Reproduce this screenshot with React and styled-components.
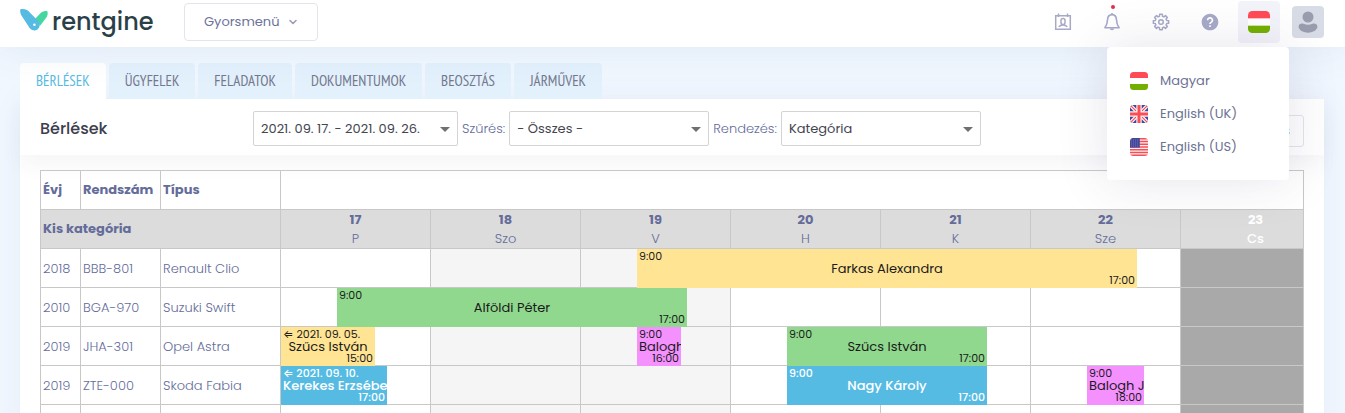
import React from "react";
import styled, { createGlobalStyle } from "styled-components";
import { BiSolidHelpCircle } from "react-icons/bi";
import { FiChevronDown } from "react-icons/fi";

//data
const tabs = ["BÉRLÉSEK", "ÜGYFELEK", "FELADATOK", "DOKUMENTUMOK", "BEOSZTÁS", "JÁRMŰVEK"];

const languages = [
	{ code: "hu", name: "Magyar" },
	{ code: "uk", name: "English (UK)" },
	{ code: "us", name: "English (US)" },
];

const days = [
	{ date: 17, name: "P" },
	{ date: 18, name: "Szo", kind: "weekend" },
	{ date: 19, name: "V", kind: "weekend" },
	{ date: 20, name: "H" },
	{ date: 21, name: "K" },
	{ date: 22, name: "Sze" },
	{ date: 23, name: "Cs", kind: "holiday" },
];

const cars = [
	{
		year: 2018,
		plate: "BBB-801",
		type: "Renault Clio",
		rentals: [{ day: 19, from: 9, end: 22, to: 17, name: "Farkas Alexandra", color: "yellow" }],
	},
	{
		year: 2010,
		plate: "BGA-970",
		type: "Suzuki Swift",
		rentals: [{ day: 17, from: 9, end: 19, to: 17, name: "Alföldi Péter", color: "green" }],
	},
	{
		year: 2019,
		plate: "JHA-301",
		type: "Opel Astra",
		rentals: [
			{ day: 17, from: 0, end: 17, to: 15, name: "Szűcs István", color: "yellow", since: "2021. 09. 05." },
			{ day: 19, from: 9, end: 19, to: 16, name: "Balogh János", color: "pink" },
			{ day: 20, from: 9, end: 21, to: 17, name: "Szűcs István", color: "green" },
		],
	},
	{
		year: 2019,
		plate: "ZTE-000",
		type: "Skoda Fabia",
		rentals: [
			{ day: 17, from: 0, end: 17, to: 17, name: "Kerekes Erzsébet", color: "blue", since: "2021. 09. 10." },
			{ day: 20, from: 9, end: 21, to: 17, name: "Nagy Károly", color: "blue" },
			{ day: 22, from: 9, end: 22, to: 18, name: "Balogh János", color: "pink" },
		],
	},
	{ year: "", plate: "", type: "", rentals: [] },
];

const DAY_WIDTH = 150;
const rentalColors = {
	yellow: "#ffe494",
	green: "#8fd88d",
	pink: "#f591ff",
	blue: "#56bbe3",
};

const offset = (hours) => Math.round((hours / 24) * DAY_WIDTH);

//eight teeth, four corners each
const gearPoints = Array.from({ length: 8 }, (_, tooth) =>
	[
		[-15, 5.9],
		[-10, 7.8],
		[10, 7.8],
		[15, 5.9],
	].map(([turn, radius]) => {
		const angle = ((tooth * 45 + turn) * Math.PI) / 180;
		return `${(9 + radius * Math.cos(angle)).toFixed(2)},${(9 + radius * Math.sin(angle)).toFixed(2)}`;
	})
)
	.flat()
	.join(" ");

function Flag({ code, size }) {
	return (
		<svg width={size} height={size} viewBox="0 0 18 18" aria-hidden="true">
			<clipPath id={`flag-${code}-${size}`}>
				<rect width="18" height="18" rx="3.5" />
			</clipPath>
			<g clipPath={`url(#flag-${code}-${size})`}>
				{code === "hu" && (
					<>
						<rect width="18" height="18" fill="#fff" />
						<rect width="18" height="6" fill="#ff4b55" />
						<rect y="12" width="18" height="6" fill="#73af00" />
					</>
				)}
				{code === "uk" && (
					<>
						<rect width="18" height="18" fill="#41479b" />
						<path d="M0 0L18 18M18 0L0 18" stroke="#f5f5f5" strokeWidth="3.6" />
						<path d="M0 0L18 18M18 0L0 18" stroke="#ff4b55" strokeWidth="1.2" />
						<path d="M9 0V18M0 9H18" stroke="#f5f5f5" strokeWidth="5.4" />
						<path d="M9 0V18M0 9H18" stroke="#ff4b55" strokeWidth="3" />
					</>
				)}
				{code === "us" && (
					<>
						<rect width="18" height="18" fill="#f5f5f5" />
						<path
							d="M0 .7H18M0 3.46H18M0 6.22H18M0 9H18M0 11.76H18M0 14.52H18M0 17.3H18"
							stroke="#ff4b55"
							strokeWidth="1.4"
						/>
						<rect width="9.8" height="9.6" fill="#41479b" />
						<path d="M1 2H9M1 4H9M1 6H9M1 8H9" stroke="#8e92c6" strokeWidth=".6" strokeDasharray="1 1" />
					</>
				)}
			</g>
		</svg>
	);
}

function Rental({ rental }) {
	const left = offset(rental.from);
	const width = (rental.end - rental.day) * DAY_WIDTH + offset(rental.to) - left;
	return (
		<RentalBar $color={rental.color} style={{ left, width }}>
			<Time>{rental.since ? `⇐ ${rental.since}` : `${rental.from}:00`}</Time>
			<Renter>{rental.name}</Renter>
			<Time $end>{rental.to}:00</Time>
		</RentalBar>
	);
}

function App() {
	return (
		<>
			<GlobalStyle />
			<Page>
				<TopBar>
					<Logo href="#">
						<svg width="28" height="26" viewBox="0 0 28 26" aria-hidden="true">
							<path
								d="M19.500 5.200C22 2 25.500 1.500 27.300 2.300C28.300 5 27.200 7.500 25.800 9.300L20.300 16.500L14.500 10.500z"
								fill="#44d7a0"
							/>
							<path
								d="M.2.4C4.500-.6 8 1.200 10.200 3.900L18.800 12.600a5.600 5.600 0 1 1-9.200 6.400L1.300 6.300C.3 4.500 0 2.400 .2.4z"
								fill="#56bbe3"
							/>
							<circle cx="14.400" cy="15.800" r="1.300" fill="#fff" />
						</svg>
						<Brand>rentgine</Brand>
					</Logo>
					<QuickMenu type="button">
						Gyorsmenü <FiChevronDown size={12} strokeWidth={3} />
					</QuickMenu>
					<Actions>
						<IconButton type="button" aria-label="Contacts">
							<svg width="18" height="18" viewBox="0 0 18 18" fill="none" stroke="currentColor" strokeWidth="1.5">
								<path d="M1.700 2.700H16.300V16.300H1.700zM4.500 .5V4M13.500 .5V4" />
								<path d="M7 9.500V7.500a2 2 0 0 1 4 0V9.500a2 2 0 0 1-4 0M4.800 13.800c1-1.500 2.400-1.900 4.200-1.900s3.200.4 4.200 1.900" />
							</svg>
						</IconButton>
						<IconButton type="button" aria-label="Notifications">
							<svg width="18" height="18" viewBox="0 0 18 18" fill="none" stroke="currentColor" strokeWidth="1.6">
								<path
									d="M9 1.600C5.800 1.600 4.600 4 4.500 7C4.400 10.500 3.800 12 1.900 14.700H16.100C14.200 12 13.600 10.500 13.500 7C13.400 4 12.200 1.600 9 1.600zM9 0V2"
									strokeLinejoin="round"
								/>
								<path d="M6.800 15.500a2.200 1.800 0 0 0 4.400 0z" fill="currentColor" stroke="none" />
							</svg>
							<Dot />
						</IconButton>
						<IconButton type="button" aria-label="Settings">
							<svg width="18" height="18" viewBox="0 0 18 18" fill="none" stroke="currentColor" strokeWidth="1.5">
								<polygon points={gearPoints} strokeLinejoin="round" />
								<circle cx="9" cy="9" r="2.300" />
							</svg>
						</IconButton>
						<IconButton type="button" aria-label="Help">
							<BiSolidHelpCircle size={20} />
						</IconButton>
						<LanguagePicker>
							<IconButton type="button" aria-label="Language" $active>
								<Flag code="hu" size={22} />
							</IconButton>
							<LanguageMenu>
								{languages.map((language) => (
									<li key={language.code}>
										<LanguageLink href="#">
											<Flag code={language.code} size={18} />
											{language.name}
										</LanguageLink>
									</li>
								))}
							</LanguageMenu>
						</LanguagePicker>
						<Avatar type="button" aria-label="Profile">
							<svg width="20" height="22" viewBox="0 0 20 22" fill="#9a9dad">
								<circle cx="10" cy="6" r="5.500" />
								<path d="M.5 16c0-3 3-4 5-3.200c3 1.200 6 1.200 9 0c2-.8 5 .2 5 3.200c-2 7.500-17 7.500-19 0z" />
							</svg>
						</Avatar>
					</Actions>
				</TopBar>
				<Content>
					<Tabs>
						{tabs.map((tab, i) => (
							<Tab href="#" key={tab} $active={i === 0}>
								{tab}
							</Tab>
						))}
					</Tabs>
					<Card>
						<Toolbar>
							<Title>Bérlések</Title>
							<Filters>
								<SelectBox $wide>
									<select aria-label="Időszak">
										<option>2021. 09. 17. - 2021. 09. 26.</option>
									</select>
								</SelectBox>
								<label htmlFor="filter">Szűrés:</label>
								<SelectBox>
									<select id="filter">
										<option>- Összes -</option>
									</select>
								</SelectBox>
								<label htmlFor="order">Rendezés:</label>
								<SelectBox>
									<select id="order">
										<option>Kategória</option>
									</select>
								</SelectBox>
							</Filters>
							<NewRental type="button">Új bérlés</NewRental>
						</Toolbar>
						<Schedule>
							<Table>
								<colgroup>
									<col width="40" />
									<col width="80" />
									<col width="120" />
									{days.map((day) => (
										<col key={day.date} width={DAY_WIDTH} />
									))}
								</colgroup>
								<thead>
									<tr>
										<th>Évj</th>
										<th>Rendszám</th>
										<th>Típus</th>
										<th colSpan={days.length} />
									</tr>
									<CategoryRow>
										<th colSpan={3}>Kis kategória</th>
										{days.map((day) => (
											<DayHead key={day.date} $kind={day.kind}>
												{day.date}
												<span>{day.name}</span>
											</DayHead>
										))}
									</CategoryRow>
								</thead>
								<tbody>
									{cars.map((car, i) => (
										<tr key={i}>
											<td>{car.year}</td>
											<td>{car.plate}</td>
											<td>{car.type}</td>
											{days.map((day) => (
												<DayCell key={day.date} $kind={day.kind}>
													{car.rentals
														.filter((rental) => rental.day === day.date)
														.map((rental) => (
															<Rental key={rental.from} rental={rental} />
														))}
												</DayCell>
											))}
										</tr>
									))}
								</tbody>
							</Table>
						</Schedule>
					</Card>
				</Content>
			</Page>
		</>
	);
}

const GlobalStyle = createGlobalStyle`
	* {
		box-sizing: border-box;
	}
	body {
		margin: 0;
		background: #f0f7ff;
		color: #646c9a;
		font-family: Poppins, Inter, "Noto Sans", sans-serif;
		font-size: 13px;
		font-weight: 300;
		line-height: 20px;
	}
	button, select {
		font: inherit;
		color: inherit;
	}
	a {
		text-decoration: none;
	}
`;

const Page = styled.div`
	height: 100vh;
	overflow: hidden;
`;

const TopBar = styled.header`
	position: relative;
	z-index: 2;
	display: flex;
	align-items: center;
	height: 47px;
	padding: 0 21px 3px 20px;
	background: white;
	box-shadow: 0 0 40px rgba(70, 85, 115, 0.1);
`;

const Logo = styled.a`
	display: flex;
	align-items: center;
	gap: 4px;
	width: 164px;
	color: #2b3f49;
`;

const Brand = styled.span`
	font-size: 24px;
	font-weight: 500;
	line-height: 40px;
`;

const QuickMenu = styled.button`
	display: flex;
	align-items: center;
	justify-content: space-between;
	width: 134px;
	height: 38px;
	padding: 0 18px 0 19px;
	color: #6c7299;
	font-weight: 400;
	background: white;
	border: 1px solid #e2e5ec;
	border-radius: 4px;
	svg {
		color: #959cb6;
	}
`;

const Actions = styled.div`
	display: flex;
	align-items: center;
	gap: 7px;
	margin-left: auto;
`;

const IconButton = styled.button`
	position: relative;
	display: flex;
	align-items: center;
	justify-content: center;
	width: 42px;
	height: 42px;
	padding: 0;
	color: #a6aac8;
	background: ${(props) => (props.$active ? "#f3f3fa" : "none")};
	border: none;
	border-radius: 4px;
`;

const Dot = styled.span`
	position: absolute;
	top: 4px;
	left: 20px;
	width: 4px;
	height: 4px;
	background: #e0314b;
	border-radius: 50%;
`;

const LanguagePicker = styled.div`
	position: relative;
`;

const LanguageMenu = styled.ul`
	position: absolute;
	top: 46px;
	right: -9px;
	width: 182px;
	margin: 0;
	padding: 17px 0;
	list-style: none;
	background: white;
	border-radius: 4px;
	box-shadow: 0 0 50px rgba(82, 63, 105, 0.15);
`;

const LanguageLink = styled.a`
	display: flex;
	align-items: center;
	gap: 12px;
	height: 33px;
	padding: 0 23px;
	color: #6c7293;
	font-weight: 400;
`;

const Avatar = styled.button`
	display: flex;
	align-items: center;
	justify-content: center;
	width: 32px;
	height: 32px;
	margin-left: 5px;
	padding: 0;
	background: #d8dce6;
	border: none;
	border-radius: 4px;
`;

const Content = styled.main`
	padding: 16px 21px 0 20px;
`;

const Tabs = styled.nav`
	display: flex;
	gap: 3px;
`;

const Tab = styled.a`
	height: 36px;
	padding: 0 16px;
	color: ${(props) => (props.$active ? "#56bbe3" : "#74788d")};
	background: ${(props) => (props.$active ? "white" : "#e3f1fd")};
	border-radius: 4px 4px 0 0;
	font-family: "PT Sans Narrow", "Open Sans Condensed", "Noto Sans ExtraCondensed", "Roboto Condensed",
		"Liberation Sans Narrow", sans-serif;
	font-size: 15px;
	font-weight: 500;
	line-height: 36px;
`;

const Card = styled.section`
	background: white;
	box-shadow: 0 0 30px rgba(82, 63, 105, 0.05);
`;

const Toolbar = styled.div`
	display: flex;
	align-items: center;
	height: 56px;
	padding: 3px 20px 0;
	box-shadow: 0 10px 20px rgba(82, 63, 105, 0.05);
`;

const Title = styled.h1`
	width: 213px;
	margin: 0;
	color: #3c3e4d;
	font-size: 16px;
	font-weight: 500;
`;

const Filters = styled.div`
	display: flex;
	align-items: center;
	gap: 4px;
`;

const SelectBox = styled.div`
	position: relative;
	width: ${(props) => (props.$wide ? "205px" : "200px")};
	select {
		display: block;
		width: 100%;
		height: 35px;
		padding: 0 7px;
		color: #44454f;
		font-weight: 400;
		appearance: none;
		background: white;
		border: 1px solid #d4d4d4;
		border-radius: 2px;
	}
	&::after {
		content: "";
		position: absolute;
		top: 16px;
		right: 8px;
		border: 5px solid transparent;
		border-top-color: #707070;
		border-bottom: none;
	}
`;

const NewRental = styled.button`
	align-self: flex-end;
	height: 32px;
	margin: 0 0 8px auto;
	padding: 0 13px;
	color: #56bbe3;
	font-weight: 400;
	background: none;
	border: 1px solid #e2e5ec;
	border-radius: 3px;
`;

const Schedule = styled.div`
	margin: 15px 20px 0;
	overflow: hidden;
	border: 1px solid #c8c8c8;
`;

const Table = styled.table`
	table-layout: fixed;
	width: 1290px;
	border-spacing: 0;
	th,
	td {
		height: 39px;
		padding: 0 2px;
		text-align: left;
		border: solid #c8c8c8;
		border-width: 0 1px 1px 0;
	}
	td {
		padding-top: 1px;
	}
	th {
		font-weight: 700;
	}
`;

const CategoryRow = styled.tr`
	background: #dcdcdc;
`;

const DayHead = styled.th`
	&& {
		color: ${(props) => (props.$kind === "holiday" ? "white" : "inherit")};
		line-height: 19px;
		text-align: center;
	}
	span {
		display: block;
		font-weight: ${(props) => (props.$kind === "holiday" ? 500 : 300)};
	}
`;

const dayColors = { weekend: "#f5f5f5", holiday: "#a9a9a9" };

const DayCell = styled.td`
	position: relative;
	background: ${(props) => dayColors[props.$kind] || "white"};
`;

const RentalBar = styled.div`
	position: absolute;
	z-index: 1;
	top: 0;
	display: grid;
	grid-template: 15px 9px 15px / 100%;
	align-items: center;
	padding: 0 2px;
	overflow: hidden;
	color: ${(props) => (props.$color === "blue" ? "white" : "#1b1b1b")};
	font-weight: ${(props) => (props.$color === "blue" ? 500 : 400)};
	line-height: 15px;
	white-space: nowrap;
	background: ${(props) => rentalColors[props.$color]};
`;

const Time = styled.span`
	justify-self: ${(props) => (props.$end ? "end" : "start")};
	font-size: 11px;
`;

const Renter = styled.span`
	justify-self: safe center;
`;

export default App;
